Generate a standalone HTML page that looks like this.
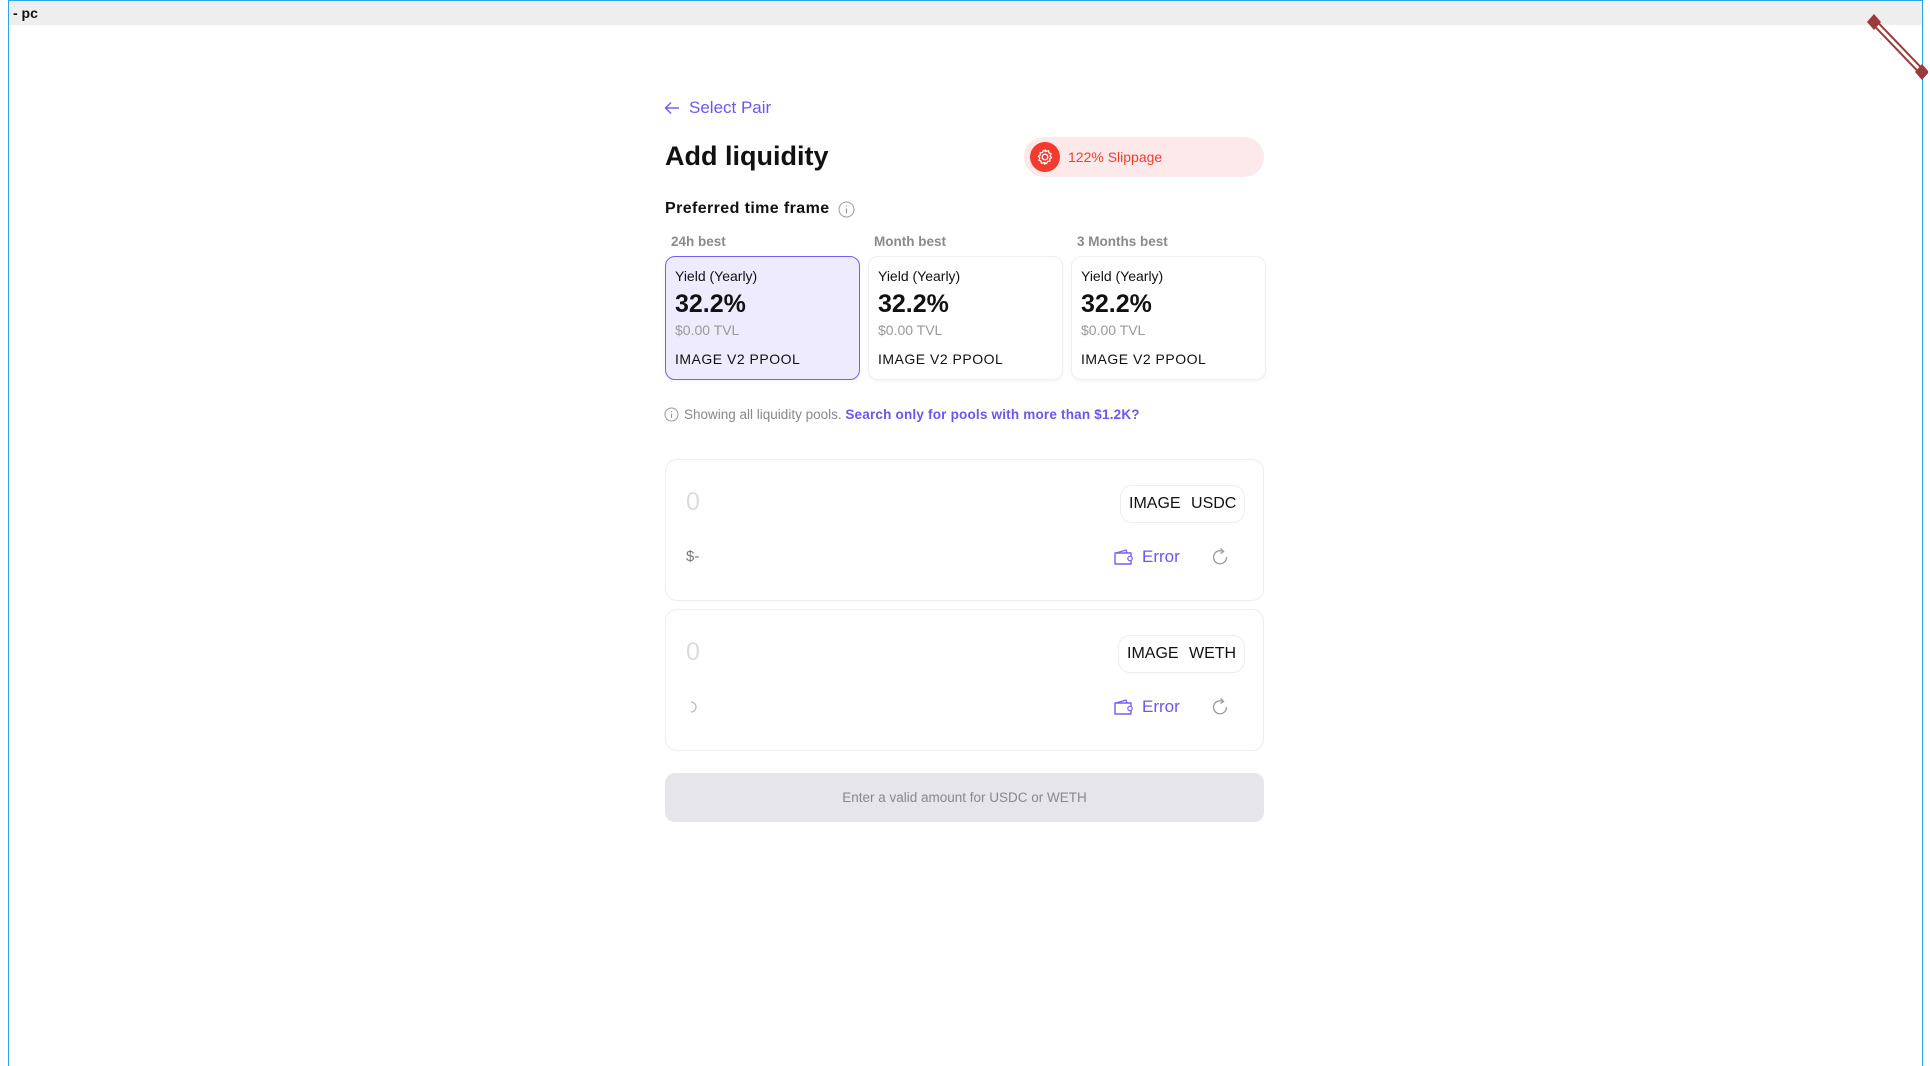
<!DOCTYPE html>
<html><head><meta charset="utf-8"><style>
*{margin:0;padding:0;box-sizing:border-box}
body{width:1930px;height:1066px;background:#fff;font-family:"Liberation Sans",sans-serif;position:relative;overflow:hidden;color:#111}
.a{position:absolute}
.frame{left:8px;top:0;width:1915px;height:1066px;border:1px solid #29a8e8;border-bottom:none}
.bar{left:9px;top:1px;width:1913px;height:24px;background:#eeeeee}
.lbl{font-size:13.5px;color:#8a8a8a;font-weight:bold}
.card{width:195px;height:124px;border:1px solid #efeff3;border-radius:10px;background:#fff;box-shadow:0 2px 4px rgba(0,0,0,.04)}
.card.sel{background:#eeebfe;border:1.5px solid #7a5cf5}
.card .y{position:absolute;left:9px;top:11px;font-size:14px}
.card .p{position:absolute;left:9px;top:33px;font-size:25px;font-weight:bold}
.card .t{position:absolute;left:9px;top:65px;font-size:14px;color:#999}
.card .n{position:absolute;left:9px;top:94px;font-size:14px;letter-spacing:.5px}
.box{left:665px;width:599px;height:142px;border:1px solid #eeeef2;border-radius:12px}
.zero{font-size:25px;color:#dcdce0}
.pill{height:38px;border:1px solid #eeeef2;border-radius:12px;font-size:16px;line-height:36px;padding:0 8px;word-spacing:6px}
.err{font-size:17px;color:#6e55f0}
</style></head><body>
<div class="a frame"></div>
<div class="a bar"></div>
<div class="a" style="left:13px;top:5px;font-size:14px;font-weight:bold">- pc</div>
<svg class="a" style="left:1866px;top:14px" width="62" height="66"><line x1="8" y1="8" x2="56" y2="58" stroke="#9b3a3a" stroke-width="7"/><line x1="8" y1="8" x2="56" y2="58" stroke="#fff" stroke-width="3"/><polygon points="1,8 8,0 15,8 8,16" fill="#9b3a3a"/><polygon points="49,58 56,50 63,58 56,66" fill="#9b3a3a"/></svg>

<svg class="a" style="left:664px;top:101px" width="16" height="14"><path d="M15 7H2M7 1.5L1.5 7 7 12.5" stroke="#7a5cf5" stroke-width="1.5" fill="none"/></svg>
<div class="a" style="left:689px;top:98px;font-size:17px;color:#6e55f0">Select Pair</div>
<div class="a" style="left:665px;top:141px;font-size:27px;font-weight:bold">Add liquidity</div>
<div class="a" style="left:1024px;top:137px;width:240px;height:40px;border-radius:20px;background:#fde9e9"></div>
<div class="a" style="left:1030px;top:142px;width:30px;height:30px;border-radius:50%;background:#f23b2f"></div>
<svg class="a" style="left:1035px;top:147px" width="20" height="20" viewBox="0 0 20 20"><circle cx="10" cy="10" r="2.8" fill="none" stroke="#fff" stroke-width="1.3"/><path d="M10 2.5l1.4 1.8 2.2-.6.4 2.2 2.1.9-.9 2.1 1.3 1.8-1.8 1.2.2 2.3-2.3.2-.9 2.1-2.1-.9L10 17.5l-1.4-1.8-2.2.6-.4-2.2-2.1-.9.9-2.1-1.3-1.8 1.8-1.2-.2-2.3 2.3-.2.9-2.1 2.1.9z" fill="none" stroke="#fff" stroke-width="1.2"/></svg>
<div class="a" style="left:1068px;top:149px;font-size:14px;color:#f23b2f">122% Slippage</div>

<div class="a" style="left:665px;top:200px;font-size:16px;font-weight:bold;letter-spacing:.4px">Preferred time frame</div>
<svg class="a" style="left:838px;top:201px" width="17" height="17"><circle cx="8.5" cy="8.5" r="7.5" fill="none" stroke="#999" stroke-width="1"/><path d="M8.5 7.5v5M8.5 4.5v1" stroke="#999" stroke-width="1.2"/></svg>

<div class="a lbl" style="left:671px;top:234px">24h best</div>
<div class="a lbl" style="left:874px;top:234px">Month best</div>
<div class="a lbl" style="left:1077px;top:234px">3 Months best</div>

<div class="a card sel" style="left:665px;top:256px"><div class="y">Yield (Yearly)</div><div class="p">32.2%</div><div class="t">$0.00 TVL</div><div class="n">IMAGE V2 PPOOL</div></div>
<div class="a card" style="left:868px;top:256px"><div class="y">Yield (Yearly)</div><div class="p">32.2%</div><div class="t">$0.00 TVL</div><div class="n">IMAGE V2 PPOOL</div></div>
<div class="a card" style="left:1071px;top:256px"><div class="y">Yield (Yearly)</div><div class="p">32.2%</div><div class="t">$0.00 TVL</div><div class="n">IMAGE V2 PPOOL</div></div>

<svg class="a" style="left:664px;top:407px" width="15" height="15"><circle cx="7.5" cy="7.5" r="6.5" fill="none" stroke="#999" stroke-width="1"/><path d="M7.5 6.5v4.5M7.5 4v1" stroke="#999" stroke-width="1.1"/></svg>
<div class="a" style="left:684px;top:407px;font-size:13.5px;color:#888">Showing all liquidity pools. <span style="color:#6e55f0;font-weight:bold;letter-spacing:.2px">Search only for pools with more than $1.2K?</span></div>

<div class="a box" style="top:459px"></div>
<div class="a zero" style="left:686px;top:488px">0</div>
<div class="a pill" style="left:1120px;top:485px">IMAGE USDC</div>
<div class="a" style="left:686px;top:548px;font-size:15px;color:#777">$-</div>
<svg class="a" style="left:1113px;top:548px" width="22" height="18"><path d="M2 5h16v11H2z" fill="none" stroke="#7a5cf5" stroke-width="1.4" stroke-linejoin="round"/><path d="M3 5l10-3 1 3" fill="none" stroke="#7a5cf5" stroke-width="1.3"/><circle cx="17" cy="10.5" r="2.2" fill="#fff" stroke="#7a5cf5" stroke-width="1.2"/></svg>
<div class="a err" style="left:1142px;top:547px">Error</div>
<svg class="a" style="left:1211px;top:547px" width="18" height="19"><path d="M12 4.5A6.5 6.5 0 1 0 15.5 10" fill="none" stroke="#999" stroke-width="1.3"/><path d="M9.5 1.5l3 3-3 2" fill="none" stroke="#999" stroke-width="1.3"/></svg>

<div class="a box" style="top:609px"></div>
<div class="a zero" style="left:686px;top:638px">0</div>
<div class="a pill" style="left:1118px;top:635px">IMAGE WETH</div>
<svg class="a" style="left:685px;top:701px" width="12" height="12"><path d="M6 1a5 5 0 0 1 0 10" fill="none" stroke="#bbb" stroke-width="1.3"/></svg>
<svg class="a" style="left:1113px;top:698px" width="22" height="18"><path d="M2 5h16v11H2z" fill="none" stroke="#7a5cf5" stroke-width="1.4" stroke-linejoin="round"/><path d="M3 5l10-3 1 3" fill="none" stroke="#7a5cf5" stroke-width="1.3"/><circle cx="17" cy="10.5" r="2.2" fill="#fff" stroke="#7a5cf5" stroke-width="1.2"/></svg>
<div class="a err" style="left:1142px;top:697px">Error</div>
<svg class="a" style="left:1211px;top:697px" width="18" height="19"><path d="M12 4.5A6.5 6.5 0 1 0 15.5 10" fill="none" stroke="#999" stroke-width="1.3"/><path d="M9.5 1.5l3 3-3 2" fill="none" stroke="#999" stroke-width="1.3"/></svg>

<div class="a" style="left:665px;top:773px;width:599px;height:49px;border-radius:10px;background:#e6e6ea;text-align:center;line-height:49px;font-size:13.5px;color:#888">Enter a valid amount for USDC or WETH</div>
</body></html>
